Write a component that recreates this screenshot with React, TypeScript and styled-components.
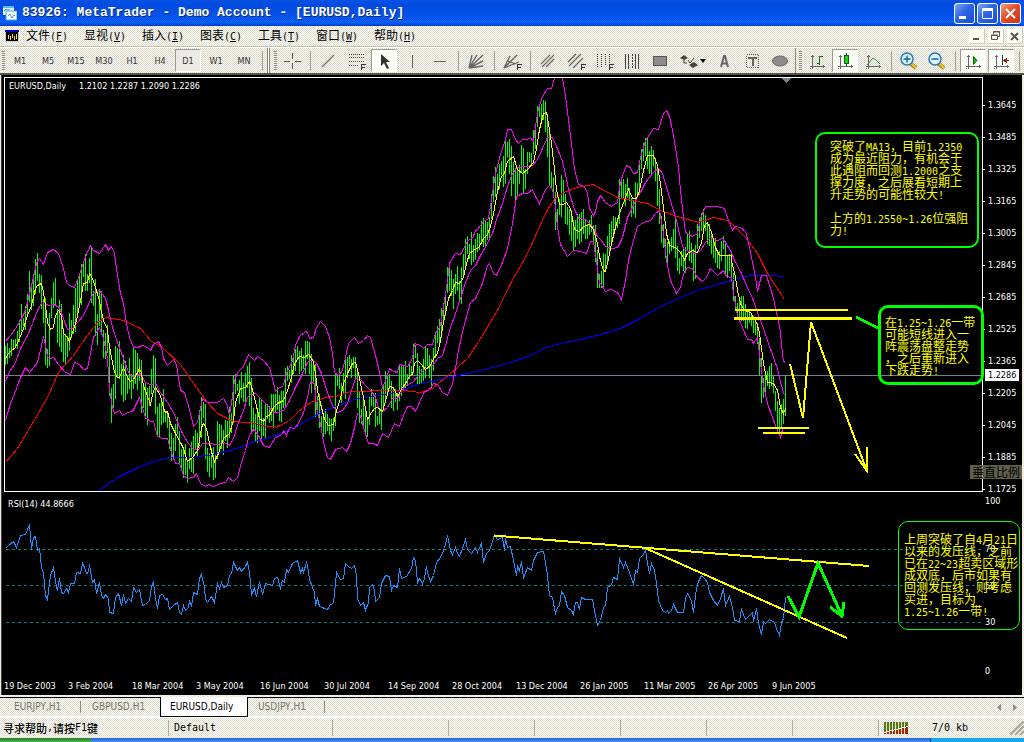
import React from "react";
import styled, { createGlobalStyle, css } from "styled-components";

const tahoma = `"DejaVu Sans Condensed", "DejaVu Sans", sans-serif`;
const song = `"Noto Sans CJK SC", sans-serif`;
const mono = `"Liberation Mono", "Noto Sans CJK SC", monospace`;
const halfWidth = `"DejaVu Sans Mono", "Noto Sans CJK SC", monospace`;

const weave = (a: string, b: string, c: string) => css`
  background-color: ${b};
  background-image: conic-gradient(${a} 25%, ${b} 0 50%, ${c} 0 75%, ${b} 0);
  background-size: 2px 2px;
`;

const Global = createGlobalStyle`
  * { box-sizing: border-box; }
  body { margin: 0; background: #ece9d8; }
  button { font: inherit; color: inherit; border: 0; padding: 0; margin: 0; background: none; }
  svg { display: block; }
`;

const Window = styled.div`
  display: flex;
  flex-direction: column;
  overflow: hidden;
  font-family: ${tahoma};
  font-size: 9px;
`;

/* ---------- title and menu ---------- */

const TitleBar = styled.header`
  display: flex;
  align-items: center;
  height: 26px;
  padding: 0 3px;
  gap: 5px;
  background: conic-gradient(#0033cc55 25%, #0000 0 50%, #0033cc55 0 75%, #0000 0) 0 0 / 2px 2px,
    linear-gradient(#0a58e8 0, #0250e4 20%, #0558ee 60%, #0a68ff 85%, #0040c8 100%);
`;

const Title = styled.h1`
  flex: 1;
  margin: 0;
  color: #fff;
  font: bold 13px/20px ${mono};
  white-space: pre;
  text-shadow: 1px 1px 0 #0a2a80;
`;

const WindowButtons = styled.div`
  display: flex;
  gap: 2px;
`;

const WindowButton = styled.button<{ $close?: boolean }>`
  width: 21px;
  height: 21px;
  border: 1px solid #fff;
  border-radius: 3px;
  background: ${(p) =>
    p.$close
      ? "linear-gradient(135deg, #f0a080, #e0502c 45%, #c83410)"
      : "linear-gradient(135deg, #7fa8f4, #2e66e4 45%, #1c4cd0)"};
`;

const MenuBar = styled.nav`
  display: flex;
  align-items: center;
  height: 21px;
  padding: 0 1px 0 5px;
  border-bottom: 1px solid #c4c2a4;
  ${weave("#ffffff", "#dfddd2", "#fffff0")}
`;

const MenuItems = styled.div`
  display: flex;
  flex: 1;
  gap: 16px;
  padding-left: 7px;
`;

const MenuItem = styled.button`
  width: 42px;
  color: #000;
  font: 12px/16px ${song};
  white-space: nowrap;
  text-align: left;
`;

const Narrow = styled.span`
  font-family: ${halfWidth};
  font-size: 10px;
`;

const MdiButtons = styled.div`
  display: flex;
  gap: 3px;
`;

const MdiButton = styled.button`
  width: 16px;
  height: 15px;
  background: #fffff4;
  border-right: 1px solid #d0cec0;
  border-bottom: 1px solid #d0cec0;
`;

/* ---------- toolbar ---------- */

const ToolBar = styled.div`
  display: flex;
  align-items: center;
  height: 26px;
  padding-left: 2px;
  border-top: 1px solid #fff;
  overflow: hidden;
  ${weave("#fffffa", "#dad8cd", "#f8f6ea")}
`;

const Grip = styled.span`
  flex: none;
  width: 3px;
  height: 20px;
  margin-right: 1px;
  background: repeating-linear-gradient(#8c8a80 0 1px, #f4f2e6 1px 2px);
`;

const Rule = styled.span`
  flex: none;
  width: 1px;
  height: 20px;
  margin: 0 3px 0 4px;
  background: #a4a296;
`;

const BandEdge = styled.span`
  flex: none;
  width: 3px;
  height: 25px;
  margin: 0 4px 0 1px;
  border-left: 1px solid #8c8a80;
  border-right: 1px solid #8c8a80;
  background: #fff;
`;

const BandEnd = styled.span`
  flex: none;
  width: 1px;
  height: 25px;
  margin: 0 3px 0 1px;
  background: #8c8a80;
`;

const Tool = styled.button<{ $pressed?: boolean; $wide?: boolean; $dim?: boolean }>`
  display: flex;
  align-items: center;
  justify-content: center;
  flex: none;
  width: ${(p) => (p.$wide ? 36 : 28)}px;
  height: 23px;
  color: #333;
  line-height: 12px;
  ${(p) =>
    p.$pressed &&
    css`
      border: 1px solid;
      border-color: #9c9a90 #fff #fff #9c9a90;
      background: ${p.$dim ? "#ebe9e4" : "#fdfdf8"};
      background-clip: padding-box;
      width: 26px;
      margin: 0 1px;
    `}
`;

/* ---------- chart ---------- */

const Frame = styled.main`
  padding: 0 2px 2px 1px;
  border-top: 2px solid #55544a;
  background: #f0eee2;
`;

const Chart = styled.section`
  position: relative;
  display: grid;
  grid-template-columns: minmax(0, 1fr) 39px;
  padding: 2px 0 0 2px;
  border-left: 1px solid #444;
  background: #000;
  color: #fff;
  height: 620px;
`;

const Plots = styled.div`
  display: flex;
  flex-direction: column;
`;

const PricePlot = styled.div`
  position: relative;
  height: 415px;
  border: 1px solid #fff;
`;

const RsiPlot = styled.div`
  position: relative;
  height: 188px;
`;

const Canvas = styled.svg`
  width: 100%;
  height: 100%;
`;

const Legend = styled.p<{ $top: number }>`
  position: absolute;
  left: 4px;
  top: ${(p) => p.$top}px;
  display: flex;
  margin: 0;
  line-height: 12px;
  white-space: pre;
`;

const Symbol = styled.span`
  width: 70px;
`;

const Dates = styled.div`
  display: flex;
  line-height: 13px;
`;

const DateLabel = styled.time`
  flex: 64 0 0;
  min-width: 0;
  white-space: nowrap;
`;

const DateRest = styled.span`
  flex: 147 0 0;
`;

const Scales = styled.div`
  position: relative;
`;

const PriceScale = styled.div`
  display: flex;
  flex-direction: column;
  gap: 16px;
  padding-top: 20px;
`;

const PriceMark = styled.span`
  display: flex;
  align-items: center;
  gap: 3px;
  line-height: 16px;
  &::before {
    content: "";
    width: 2px;
    height: 1px;
    background: #fff;
  }
`;

const RsiScale = styled.div`
  display: grid;
  grid-template-rows: 48px 37px 36px 49px 9px;
  padding-left: 2px;
  line-height: 9px;
`;

const LastPrice = styled.strong`
  position: absolute;
  top: 292px;
  left: 2px;
  width: 34px;
  padding-left: 3px;
  background: #fff;
  color: #000;
  font-weight: normal;
  line-height: 12px;
`;

const Note = styled.aside<{ $right: number; $top: number; $w: number; $h: number; $line: number; $pad: string }>`
  position: absolute;
  right: ${(p) => p.$right}px;
  top: ${(p) => p.$top}px;
  width: ${(p) => p.$w}px;
  height: ${(p) => p.$h}px;
  padding: ${(p) => p.$pad};
  border: ${(p) => p.$line}px solid #00ff00;
  border-radius: 10px;
  color: #ffff00;
  font: 12px/12px ${song};
  white-space: nowrap;
`;

const NoteLine = styled.div`
  height: 12px;
`;

const Hint = styled.div`
  position: absolute;
  right: 0;
  top: 390px;
  padding: 0 2px;
  background: #77775fcc;
  color: #000;
  font: 12px/14px ${song};
`;

/* ---------- tabs and status ---------- */

const TabBar = styled.div`
  display: flex;
  height: 21px;
  border-top: 1px solid #000;
  border-bottom: 2px solid #fff;
  ${weave("#ffffff", "#dcdacf", "#fffff0")}
`;

const Tab = styled.button<{ $w: number; $pad: number; $active?: boolean; $rule?: boolean }>`
  width: ${(p) => p.$w}px;
  padding-left: ${(p) => p.$pad}px;
  height: 18px;
  color: #77756c;
  font-size: 10px;
  line-height: 16px;
  text-align: left;
  white-space: nowrap;
  ${(p) =>
    p.$rule &&
    css`
      background: linear-gradient(#8c8a80, #8c8a80) right 3px / 1px 12px no-repeat;
    `}
  ${(p) =>
    p.$active &&
    css`
      height: 20px;
      margin-top: -1px;
      border: solid #000;
      border-width: 0 1px 1px 1px;
      background: #fff;
      color: #000;
      line-height: 19px;
    `}
`;

const TabScroll = styled.div`
  display: flex;
  gap: 12px;
  align-items: center;
  margin-left: auto;
  padding-right: 7px;
`;

const StatusBar = styled.footer`
  display: flex;
  align-items: center;
  height: 20px;
  font: 500 11px/16px ${song};
  overflow: hidden;
  ${weave("#ffffff", "#dfddd2", "#fffff0")}
`;

const Cell = styled.div<{ $w?: number; $first?: boolean }>`
  display: flex;
  align-items: center;
  flex: ${(p) => (p.$w ? `0 0 ${p.$w}px` : "1")};
  height: 16px;
  padding-left: ${(p) => (p.$first ? 3 : 5)}px;
  white-space: pre;
  border-left: ${(p) => (p.$first ? "0" : "1px solid #b0aea0")};
`;

const Traffic = styled.span`
  flex: 1;
  padding-left: 24px;
  font: 10px/16px ${halfWidth};
`;

const TaskBar = styled.div`
  display: flex;
  height: 4px;
  background: linear-gradient(#2a62d8, #4a8cf4);
`;

const StartEdge = styled.span`
  width: 92px;
  border-radius: 0 4px 0 0;
  background: linear-gradient(#2c7c2c, #48b048);
`;

const TrayEdge = styled.span`
  width: 94px;
  margin-left: auto;
  border-left: 1px solid #083c90;
  background: #18a8ec;
`;

/* ---------- data ---------- */

// high,low in plot pixels; one pair for each daily bar, two pixels apart from x = 5
const bars = `345,364 342,363 347,357 338,355 339,348 338,347 330,348 319,341 303,330 317,325 305,329 293,315 270,301 283,309 273,305 258,293 252,280 273,292 274,308 298,322 297,364 348,367 312,365 297,317 281,307 277,305 308,342 299,346 303,351 327,361 333,363 335,356 312,350 319,337 304,333 287,331 279,313 274,303 263,304 263,276 253,290 273,290 257,282 246,302 290,305 278,335 313,344 288,325 290,333 329,357 332,358 324,352 342,395 387,422 383,407 345,398 347,377 340,378 363,394 354,401 360,399 375,393 357,388 373,398 345,388 349,383 352,389 358,380 359,412 383,407 382,418 387,424 385,405 368,393 354,387 357,413 406,434 402,437 397,424 388,422 410,421 412,427 417,448 432,460 437,457 423,450 416,433 430,463 448,467 447,477 443,474 460,482 447,468 441,471 435,473 429,448 432,455 409,445 396,437 401,417 403,458 447,471 452,476 447,467 446,479 452,477 420,458 423,452 424,448 429,454 419,440 420,447 406,437 412,432 374,422 373,393 383,390 379,403 371,397 382,401 372,405 365,387 361,405 377,430 407,430 413,441 412,442 397,430 398,438 417,435 402,438 403,418 405,422 393,420 393,427 393,412 386,409 394,420 390,421 390,407 367,405 365,380 369,378 354,382 352,373 348,370 345,358 350,373 347,370 354,368 340,373 340,358 341,373 353,392 362,383 363,416 395,414 393,427 415,430 413,436 408,433 413,430 417,434 418,440 417,430 373,425 375,385 367,388 382,402 372,393 355,398 356,377 354,365 358,377 356,367 356,378 368,407 390,422 408,423 397,426 405,433 418,436 395,424 388,405 392,406 392,426 415,424 408,423 388,429 384,407 370,402 373,393 373,388 380,407 388,410 388,401 391,409 363,400 365,395 365,388 360,387 373,385 363,378 365,375 343,372 344,357 352,383 365,383 368,383 358,380 345,377 347,365 354,377 358,388 347,370 331,357 325,342 318,343 307,337 302,320 290,315 266,292 263,290 269,295 278,308 273,293 265,290 280,300 266,303 253,277 238,268 235,253 243,258 231,264 244,261 238,259 232,251 233,249 220,243 217,246 219,245 221,239 216,238 193,218 175,201 166,196 173,188 163,188 160,174 155,186 140,183 141,156 138,173 145,195 161,183 167,206 168,196 164,183 144,171 147,193 168,188 151,173 151,161 152,164 129,153 123,148 105,126 106,116 103,123 99,119 100,131 113,156 133,184 171,186 176,196 191,229 208,223 198,214 174,216 179,201 193,223 206,224 208,234 209,240 219,249 219,246 213,238 213,243 211,241 208,233 218,238 223,238 219,234 214,231 224,243 224,261 249,287 273,287 270,287 252,286 253,270 235,260 223,253 220,243 215,237 216,228 217,227 178,223 178,197 178,197 183,205 177,197 187,200 197,216 200,213 181,217 182,197 160,193 148,168 142,160 137,155 137,168 150,173 145,175 149,165 157,180 168,205 188,223 215,242 223,247 238,257 241,262 240,253 236,250 228,248 218,257 245,270 257,273 250,265 247,270 246,272 232,250 230,260 242,262 248,280 244,278 223,248 217,237 212,230 208,232 214,230 222,243 223,245 233,253 238,257 237,262 250,267 250,268 240,260 235,248 240,272 255,277 253,270 250,280 272,300 295,310 302,317 297,318 295,320 295,320 303,327 310,328 310,322 313,325 315,332 317,334 322,343 337,375 357,402 377,397 373,393 370,385 365,388 362,385 375,392 390,410 400,430 407,432 403,427 398,423 375,415`
  .split(" ")
  .map((pair) => pair.split(",").map(Number));

const barPath = bars.map(([hi, lo], i) => `M${5 + i * 2} ${hi}V${lo}`).join("");

// Each leg holds x y pairs in thirds of a pixel, counted from its own origin.
type Leg = [number, number, string];
const trace = (legs: Leg[]) =>
  "M" +
  legs
    .map(([ox, oy, s]) => {
      const n = s.trim().split(/[ ,]+/).map(Number);
      const out: string[] = [];
      for (let i = 0; i < n.length; i += 2) out.push(`${Math.round(ox + n[i] / 3)} ${Math.round(oy + n[i + 1] / 3)}`);
      return out.join("L");
    })
    .join("L");

const fastAverage = trace([
  [0, 230, "16,388 22,372 34,360 46,352 58,325 70,295 82,255 94,225 106,175 112,165 124,160 130,185 136,225 142,275 150,298 158,290 166,255 175,240 182,255 190,310 200,322 208,332 220,298 228,270 240,210 250,160 260,155 268,130 276,145 286,170 298,210 304,245 312,280 320,293 325,330 332,380 342,425 350,442 358,440 370,412 380,440 390,452 400,448 410,425 418,415 424,430 430,465 438,490 450,522 460,480 466,472 480,495 488,535 495,545 502,543 510,580 525,610 540,635 550,655 562,692 575,680 590,660 598,630 604,590 610,578 618,595 628,640 636,675 643,693 655,670 670,625 688,608 698,570 706,515 720,475 735,472 746,452"],
  [250, 230, "0,460 10,490 20,540 28,565 40,573 48,557 58,555 70,530 80,520 100,510 112,480 122,440 132,400 148,377 162,380 175,372 188,392 196,430 202,480 212,530 222,567 235,585 250,583 258,540 270,505 280,460 292,430 305,400 316,397 323,430 330,460 340,500 350,568 362,545 372,535 382,530 396,543 408,500 418,467 430,470 442,498 455,470 470,450 478,435 485,432 492,400 500,390 512,403 524,418 540,405 550,385 560,370 570,330 580,275 588,235 595,205 605,180 616,155 628,160 638,140 648,100 658,70 670,60 685,52 698,28"],
  [430, 76, "155,490 170,475 180,450 190,410 200,345 212,300 222,290 232,255 250,240 262,280 276,290 290,280 308,258 318,215 328,160 340,112 347,107 355,140 363,200 372,280 378,340 388,385 398,385 408,378 420,395 432,460 446,465 460,450 478,445 490,458 500,500 507,540"],
  [600, 90, "0,510 8,540 16,542 24,505 34,460 48,400 60,360 72,330 84,298 96,325 108,325 118,300 128,240 142,195 160,195 170,225 180,280 188,350 198,430 208,465 225,470 240,485 252,507 262,490 275,480 290,485 302,455 312,405 320,395 332,425 345,470 358,495 375,495 392,495"],
  [720, 260, "34,0 44,50 52,90 60,130 72,150 90,155 108,185 116,215 122,265 130,310 142,365 160,368 170,390 180,440 190,458 194,445"],
]);

const upperBand = trace([
  [0, 230, "16,332 30,315 45,295 60,270 75,240 85,200 100,140 108,100 116,85 130,102 142,65 160,58 175,70 190,115 198,155 208,165 222,170 235,140 245,105 258,72 270,45 280,60 298,70 314,42 324,60 334,47 342,70 348,115 360,190 370,220 378,280 388,320 400,352 415,352 425,345 440,350 450,360 460,343 475,333 483,350 490,385 500,405 518,388 528,402 533,440 540,480 553,485 560,515 570,550 580,587 592,575 600,535 606,505 620,517 650,517 668,505 678,520 686,552 694,520 702,450 712,425 728,408 745,373"],
  [250, 230, "0,378 12,390 22,378 40,390 58,410 66,445 75,482 84,473 100,465 108,430 125,390 135,345 148,318 165,303 172,305 178,323 190,320 197,290 210,273 225,287 238,320 245,370 252,425 264,434 276,420 284,380 295,340 312,322 325,338 340,330 350,315 360,320 375,375 385,410 395,472 405,450 418,415 430,423 442,425 448,402 470,407 485,385 493,340 510,345 520,355 530,343 545,343 556,310 570,285 580,230 590,150 598,100 615,68 630,72 642,50 652,30 665,25 676,0"],
  [430, 76, "140,460 158,435 175,425 184,370 196,290 210,235 224,190 232,158 244,158 255,190 265,200 276,190 290,190 300,183 308,195 316,150 325,95 335,60 350,35 362,35 370,15 380,-20 390,-20 397,4 402,40 408,80 414,130 422,200 432,280 445,325 462,330 470,350 476,395 488,418 496,405 502,375 507,362"],
  [600, 90, "0,316 15,335 34,348 50,335 58,290 66,255 78,225 88,228 98,248 112,245 120,200 135,150 148,132 160,115 175,117 188,70 197,60 207,78 215,120 225,170 234,230 240,300 248,380 256,425 275,437 290,430 300,385 316,348 350,347 372,355 385,390 395,420 404,408 420,410 435,422 445,455 452,500"],
  [720, 260, "104,50 112,92 124,45 138,45 150,85 160,115 166,145 174,180 180,220 186,280 190,303 194,305"],
]);

const middleBand = trace([
  [0, 230, "16,452 25,430 45,395 60,355 80,315 95,280 110,240 125,212 145,225 160,222 178,230 190,265 200,297 215,293 230,275 250,255 265,222 280,185 298,180 315,205 325,240 335,290 350,335 370,385 385,425 400,440 420,428 435,455 450,463 465,460 480,485 500,515 520,545 532,575 545,610 565,640 580,657 595,657 605,640 625,640 650,643 672,635 688,645 700,625 715,575 728,540 740,500"],
  [250, 230, "0,492 15,490 30,503 50,525 70,545 85,547 100,540 115,515 135,470 155,430 170,395 185,388 198,398 212,430 230,485 245,525 260,545 275,540 290,520 300,490 315,445 330,447 345,465 360,480 375,500 385,530 395,543 410,530 425,505 440,503 450,490 465,465 485,455 505,435 525,415 545,405 560,385 575,375 585,345 600,290 615,250 630,205 645,155 660,120 675,105 690,75 710,40 730,0"],
  [430, 76, "198,430 215,380 230,330 245,290 260,273 285,270 305,267 320,250 335,215 350,183 365,183 380,215 395,255 405,295 415,340 430,390 445,425 465,430 485,450 500,480"],
  [600, 90, "0,448 15,468 35,475 50,470 65,440 80,380 95,350 108,325 120,305 135,275 155,250 175,235 185,250 200,300 215,350 228,390 240,445 250,475 265,482 285,490 300,480 315,455 330,442 350,450 365,445 380,465 392,485"],
  [720, 260, "42,0 62,40 78,75 100,120 115,165 130,205 145,250 160,290 170,325 180,365 192,405"],
]);

const lowerBand = trace([
  [0, 230, "16,570 30,520 48,475 60,440 75,412 88,427 98,410 110,395 120,360 130,318 136,345 140,378 150,385 160,382 175,402 195,425 210,432 222,395 238,403 250,418 260,415 270,370 280,320 298,290 310,325 320,385 328,480 335,530 342,548 357,540 367,555 380,545 395,543 405,525 418,500 425,530 435,560 450,572 460,572 472,617 485,625 500,625 512,665 525,700 538,700 550,735 562,745 578,740 588,728 600,760 615,767 625,762 640,767 660,760 675,755 685,740 700,753 712,740 722,695 735,660 745,620"],
  [250, 230, "0,612 10,595 25,615 38,645 58,652 75,620 95,612 100,600 108,615 118,590 132,595 145,580 160,545 170,500 180,452 192,460 197,530 210,580 220,635 232,680 240,687 255,657 275,652 288,663 300,640 312,590 322,550 330,555 340,590 355,640 370,640 382,645 395,610 415,620 432,578 448,587 458,555 470,527 482,527 495,543 508,515 522,483 535,480 548,458 560,463 575,485 592,495 605,460 615,415 625,360 640,290 660,215 675,205 695,160 710,105 718,98 728,130 738,135 755,95 770,55"],
  [430, 76, "245,440 258,360 275,350 290,352 305,340 315,360 328,382 345,340 358,328 366,340 374,390 380,450 390,505 412,540 430,522 450,525 468,530 480,495 490,495 498,555 508,620"],
  [600, 90, "0,580 15,603 30,597 50,605 63,627 75,570 85,510 98,450 112,408 130,395 150,390 165,370 178,360 188,430 198,510 210,570 228,608 240,590 250,550 262,530 275,535 290,560 305,572 318,560 330,535 352,555 368,540 378,557"],
  [720, 260, "34,50 40,100 52,165 65,200 80,238 92,238 100,250 112,232 118,280 125,360 140,430 155,470 170,510 180,530 186,508"],
]);

const slowAverage = trace([
  [0, 230, "16,697 50,655 95,580 140,500 175,425 220,375 260,315 290,275 315,262 370,270 420,295 450,330 490,355 540,403 580,460 620,515 650,550 700,574 740,575"],
  [250, 230, "0,577 50,588 80,588 115,572 145,543 180,517 225,500 255,498 300,482 330,483 400,480 460,480 510,487 545,475 600,428 650,385 690,325 740,240"],
  [430, 76, "240,620 290,530 330,445 350,400 375,365 400,348 440,332 490,324"],
  [600, 90, "0,293 50,322 140,340 180,360 240,382 295,395 340,382 380,390 400,405 435,440 470,490 500,550 553,628"],
]);

const longAverage = trace([
  [0, 230, "292,782 350,742 410,710 470,690 510,682 570,680 640,672 700,658 750,638"],
  [250, 230, "0,637 60,622 130,593 190,557 230,537 320,505 400,492 450,482 490,465 580,445 680,422 780,397"],
  [530, 355, "0,0 40,-22 90,-37 150,-48"],
  [600, 90, "0,733 60,715 120,685 180,648 240,622 300,597 350,583 410,565 450,556 510,556 553,559"],
]);

const rsi = trace([
  [0, 495, "16,158 24,150 38,138 47,155 60,120 74,118 88,88 94,163 100,125 106,122 112,165 118,160 124,215 130,235 136,300 142,312 150,240 160,215 168,275 172,285 178,248 184,290 190,295 198,280 203,292 210,265 222,263 228,230 240,233 245,203 252,215 258,235 264,230 268,208 275,260 282,252 288,295 298,260 304,300 310,310 316,298 325,310 328,352 340,355 346,305 354,295 364,330 370,298 376,325 385,310 394,318 400,275 408,290 416,282 425,330 435,328 448,315 454,272 460,262 466,310 472,340 478,300 486,297 495,312 502,310 508,342 520,330 532,320 538,350 544,357 550,330 556,345 563,335 568,315 574,333 580,290 592,297 597,250 604,237 611,275 616,312 622,322 634,303 641,322 652,265 658,278 664,262 670,275 682,270 688,240 694,233 700,200 712,225 718,215 724,228 735,212 742,200 748,230 754,297 761,280 768,302 778,258 785,297 796,265 815,270 822,250 832,247 839,280 845,255 851,262 857,222 865,230 875,205 890,195 899,232 905,218 910,230 917,200 922,210 928,252 936,275 941,290 946,330 951,310 958,332 980,343 990,328 1000,323 1004,265 1007,230"],
  [340, 495, "0,253 8,250 16,203 24,212 34,220 42,210 47,240 52,310 60,330 70,320 76,345 83,320 88,275 95,268 102,285 106,317 116,305 124,265 135,240 148,243 154,285 160,270 172,275 178,220 184,248 198,242 214,220 220,185 226,195 232,260 238,250 245,265 252,250 257,213 262,230 269,257 278,240 287,200 300,185 312,160 322,120 330,165 336,178 346,155 352,175 358,183 366,160 376,133 382,163 394,175 406,155 412,170 424,145 430,202 437,175 448,165 455,138 463,118 472,133 485,125 491,165 496,130 502,155 510,152 518,195 527,240 532,212 537,225 544,198 550,248 562,215 572,225 580,195 592,170 610,168 616,200 622,240 628,300 635,305 646,355 652,335 658,330 664,287 671,300 680,335 692,345 700,358 706,322 712,322 718,342 724,307 735,313 755,312 763,345 772,390 780,375 788,335 796,330 802,275 814,268 820,247 832,252 838,190 848,215 856,202 868,230 880,268 886,225 892,230 898,190 908,178 916,163 922,205 928,235 934,205 943,225 948,265 955,315 965,345 974,350 980,345 985,355 992,345 1000,328 1010,352"],
  [680, 495, "0,352 8,350 15,310 22,295 34,315 40,350 47,280 54,258 62,240 72,250 80,260 86,290 100,315 112,330 120,310 128,278 136,330 148,302 155,335 162,375 178,378 184,343 196,372 215,352 220,378 227,340 235,385 244,418 250,378 256,385 268,372 283,380 288,400 298,420 304,380 310,368 316,305"],
]);

const prices = ["1.3645", "1.3485", "1.3325", "1.3165", "1.3005", "1.2845", "1.2685", "1.2525", "1.2365", "1.2205", "1.2045", "1.1885", "1.1725"];
const dates = ["19 Dec 2003", "3 Feb 2004", "18 Mar 2004", "3 May 2004", "16 Jun 2004", "30 Jul 2004", "14 Sep 2004", "28 Oct 2004", "13 Dec 2004", "26 Jan 2005", "11 Mar 2005", "26 Apr 2005", "9 Jun 2005"];
const menus = [["文件", "F"], ["显视", "V"], ["插入", "I"], ["图表", "C"], ["工具", "T"], ["窗口", "W"], ["帮助", "H"]];

const resistance = ["突破了MA13，目前1.2350", "成为最近阻力，有机会于", "此遇阻而回测1.2000之支", "撑力度，之后展看短期上", "升走势的可能性较大!", "", "上方的1.2550~1.26位强阻", "力!"];
const consolidation = ["在1.25~1.26一带", "可能短线进入一", "阵震荡盘整走势", "，之后重新进入", "下跌走势!"];
const outlook = ["上周突破了自4月21日", "以来的发压线，之前", "已在22~23超卖区域形", "成双底，后市如果有", "回测发压线，则考虑", "买进，目标为", "1.25~1.26一带!"];

/** Sets Latin runs in half-width cells beside the full-width characters. */
const Mixed = ({ text }: { text: string }) => (
  <>
    {text.split(/([\x21-\x7e]+)/).map((part, i) => (i % 2 ? <Narrow key={i}>{part}</Narrow> : part))}
  </>
);

const NoteText = ({ lines }: { lines: string[] }) => (
  <>
    {lines.map((line, i) => (
      <NoteLine key={i}>
        <Mixed text={line} />
      </NoteLine>
    ))}
  </>
);

/* ---------- icons ---------- */

const Icon = ({ children }: { children: React.ReactNode }) => (
  <svg width="24" height="20" viewBox="0 0 24 20" fill="none" stroke="#666" shapeRendering="crispEdges" aria-hidden="true">
    {children}
  </svg>
);
const F = () => <path d="M17.5 19v-5.5h4M17 16.5h4" stroke="#333" />;
const Axes = () => <path d="M7.5 4v14M5 15.5h15M6 5.5h3M18.5 14v3M5 17.5h1" stroke="#666" />;

const icons: Record<string, React.ReactNode> = {
  crosshair: <path d="M12.5 2v6M12.5 12v6M4 10.5h6M15 10.5h6" stroke="#555" />,
  trend: <path d="M6 16L18 4" stroke="#777" strokeWidth="1.5" shapeRendering="auto" />,
  fibo: <><path d="M5 3.5h15M5 6.5h15M5 10.5h15M5 14.5h10" strokeDasharray="1 1" stroke="#444" /><F /></>,
  cursor: <path d="M9 3v12l3-3 3 6 2-1-3-6h4z" fill="#333" stroke="none" shapeRendering="auto" />,
  vertical: <path d="M12.5 4v13" />,
  horizontal: <path d="M6 10.5h12" />,
  fan: <path d="M5 17L8 4M5 17L13 4M5 17L19 4M5 17L19 10M5 17L19 15" strokeWidth="1.4" shapeRendering="auto" />,
  fork: <><path d="M4 17L10 5M4 17L17 4M4 17L19 11M8 10l8 3" strokeWidth="1.3" shapeRendering="auto" /><F /></>,
  channel: <path d="M5 13L14 4M6 16L18 4M10 16L18 8" strokeWidth="1.3" shapeRendering="auto" />,
  channelF: <><path d="M4 11L12 3M5 15L17 3M9 17L19 7" strokeWidth="1.3" shapeRendering="auto" /><F /></>,
  zones: <><path d="M5.5 3v14M9.5 3v14M13.5 3v12M17.5 3v9" strokeDasharray="1 1" stroke="#444" /><F /></>,
  cycles: <><path d="M5.5 3v15M8.5 3v15M15.5 3v15M18.5 3v15" stroke="#444" /><path d="M12.5 3v15" strokeDasharray="2 1" stroke="#444" /></>,
  rect: <rect x="5.5" y="5.5" width="13" height="9" rx="1" fill="#8c8c8c" stroke="#555" />,
  letter: <path d="M9 16L12 5h1L16 16M10 12.5h5" strokeWidth="2" shapeRendering="auto" />,
  label: <><rect x="6.5" y="3.5" width="12" height="13" strokeDasharray="1 1" /><path d="M8 6.5h9M12.5 6v9" strokeWidth="2" /></>,
  ellipse: <ellipse cx="12" cy="10" rx="7.5" ry="5" fill="#8c8c8c" stroke="#666" shapeRendering="auto" />,
  barsChart: <><Axes /><path d="M14.5 5v9M15 5.5h3M12 12.5h2" stroke="#0a7a0a" /></>,
  candles: <><Axes /><path d="M13.5 2v13" stroke="#064" /><rect x="11.5" y="4.5" width="4" height="8" fill="#20d020" stroke="#086808" /></>,
  lineChart: <><Axes /><path d="M6 14L12 7L15 9L19 13" stroke="#2a9a2a" shapeRendering="auto" /></>,
  scroll: <><Axes /><path d="M12.5 5.5v8L16 9.5z" fill="#20b020" stroke="#087008" shapeRendering="auto" /></>,
  shift: <><Axes /><path d="M13.5 4v10" stroke="#145" /><path d="M15 9.5h5M17 8l-2 1.5 2 1.5z" fill="#b02000" stroke="#b02000" /></>,
};

const Magnifier = ({ plus }: { plus?: boolean }) => (
  <svg width="20" height="20" viewBox="0 0 20 20" aria-hidden="true">
    <path d="M11 12l6 5" stroke="#a87808" strokeWidth="4" />
    <path d="M12 12l5 5" stroke="#f0c838" strokeWidth="2" />
    <circle cx="8" cy="8" r="6" fill="#d8f4fc" stroke="#2878b8" strokeWidth="1.5" />
    <path d={plus ? "M4.5 8h7M8 4.5v7" : "M4.5 8h7"} stroke="#2060a0" strokeWidth="1.5" />
  </svg>
);

const ToolIcon = ({ name, label, pressed }: { name: string; label: string; pressed?: boolean }) => (
  <Tool aria-label={label} $pressed={pressed}>
    <Icon>{icons[name]}</Icon>
  </Tool>
);

export default function App() {
  return (
    <Window>
      <Global />
      <TitleBar>
        <svg width="14" height="16" viewBox="0 0 14 16" aria-hidden="true">
          <rect x="0" y="1" width="11" height="9" fill="#e8f8ff" />
          <rect x="0" y="1" width="11" height="2" fill="#60b8e8" />
          <rect x="3" y="6" width="11" height="9" fill="#f8ffff" stroke="#48a0d8" />
          <path d="M5 11l2-2 2 4 2-3 1 1M1 6l2-2 2 1 2-1" fill="none" stroke="#40a0c0" />
        </svg>
        <Title>83926: MetaTrader - Demo Account - [EURUSD,Daily]</Title>
        <WindowButtons>
          <WindowButton aria-label="Minimize">
            <svg width="19" height="19" aria-hidden="true"><path d="M4 13.5h7" stroke="#fff" strokeWidth="3" /></svg>
          </WindowButton>
          <WindowButton aria-label="Maximize">
            <svg width="19" height="19" aria-hidden="true"><path d="M4.5 5v9.5h10V5" stroke="#fff" fill="none" /><path d="M4 5.5h11" stroke="#fff" strokeWidth="3" /></svg>
          </WindowButton>
          <WindowButton $close aria-label="Close">
            <svg width="19" height="19" aria-hidden="true"><path d="M5 5l9 9M14 5l-9 9" stroke="#fff" strokeWidth="2" /></svg>
          </WindowButton>
        </WindowButtons>
      </TitleBar>

      <MenuBar>
        <svg width="14" height="12" viewBox="0 0 14 12" shapeRendering="crispEdges" aria-hidden="true">
          <rect width="14" height="12" fill="#ccc" />
          <rect x="1" y="1" width="12" height="10" fill="#000" />
          <rect width="14" height="2" fill="#0000c8" />
          <path d="M3.5 5v4M5.5 6v4M7.5 4v4M9.5 6v4M11.5 4v5" stroke="#ffe600" />
        </svg>
        <MenuItems>
          {menus.map(([name, key]) => (
            <MenuItem key={key}>
              {name}
              <Narrow>
                (<u>{key}</u>)
              </Narrow>
            </MenuItem>
          ))}
        </MenuItems>
        <MdiButtons>
          <MdiButton aria-label="Minimize chart">
            <svg width="15" height="14" aria-hidden="true"><path d="M4 10h6" stroke="#555" strokeWidth="2" /></svg>
          </MdiButton>
          <MdiButton aria-label="Restore chart">
            <svg width="15" height="14" fill="none" stroke="#555" aria-hidden="true"><path d="M5.5 5V2.5h6v5H10M5 3h7M3.5 6.5h6v4h-6zM3 6h7" /></svg>
          </MdiButton>
          <MdiButton aria-label="Close chart">
            <svg width="15" height="14" aria-hidden="true"><path d="M4 4l7 7M11 4l-7 7" stroke="#555" strokeWidth="2" /></svg>
          </MdiButton>
        </MdiButtons>
      </MenuBar>

      <ToolBar role="toolbar">
        <Grip />
        {["M1", "M5", "M15", "M30", "H1", "H4", "D1", "W1", "MN"].map((t) => (
          <Tool key={t} $pressed={t === "D1"} $dim={t === "D1"}>{t}</Tool>
        ))}
        <Rule />
        <BandEdge />
        <Grip />
        <ToolIcon name="crosshair" label="Crosshair" />
        <Rule />
        <ToolIcon name="trend" label="Trendline" />
        <ToolIcon name="fibo" label="Fibonacci retracement" />
        <ToolIcon name="cursor" label="Cursor" pressed />
        <ToolIcon name="vertical" label="Vertical line" />
        <ToolIcon name="horizontal" label="Horizontal line" />
        <Rule />
        <ToolIcon name="fan" label="Gann fan" />
        <Rule />
        <ToolIcon name="fork" label="Fibonacci fan" />
        <Rule />
        <ToolIcon name="channel" label="Channel" />
        <ToolIcon name="channelF" label="Fibonacci channel" />
        <ToolIcon name="zones" label="Fibonacci time zones" />
        <ToolIcon name="cycles" label="Cycle lines" />
        <ToolIcon name="rect" label="Rectangle" />
        <Tool $wide aria-label="Arrows">
          <svg width="28" height="20" viewBox="0 0 28 20" aria-hidden="true">
            <path d="M2 7l4-3 4 3-4 2zM11 14l4 3 5-3-4-3z" fill="#444" />
            <path d="M6 8v4h3M10 9l2 3 4-5" stroke="#444" fill="none" />
            <path d="M22 8h6l-3 4z" fill="#000" />
          </svg>
        </Tool>
        <ToolIcon name="letter" label="Text" />
        <ToolIcon name="label" label="Text label" />
        <ToolIcon name="ellipse" label="Ellipse" />
        <BandEnd />
        <Grip />
        <ToolIcon name="barsChart" label="Bar chart" />
        <ToolIcon name="candles" label="Candlesticks" pressed />
        <ToolIcon name="lineChart" label="Line chart" />
        <Rule />
        <Tool aria-label="Zoom in"><Magnifier plus /></Tool>
        <Tool aria-label="Zoom out"><Magnifier /></Tool>
        <Rule />
        <ToolIcon name="scroll" label="Auto scroll" pressed />
        <ToolIcon name="shift" label="Chart shift" pressed />
        <Rule />
      </ToolBar>

      <Frame>
        <Chart>
          <Plots>
            <PricePlot>
              <Canvas viewBox="5 78 977 413" preserveAspectRatio="none" fill="none" shapeRendering="crispEdges" role="img" aria-label="EURUSD daily price">
                <path d="M781 78h10l-5 5z" fill="#708090" />
                <path d="M5 375.5H982" stroke="#708090" />
                <g transform="translate(0.5 0.5)">
                  <path d={barPath} stroke="#00ff00" />
                  <path d={longAverage} stroke="#0000ff" />
                  <path d={slowAverage} stroke="#ff0000" />
                  <path d={upperBand} stroke="#ff00ff" />
                  <path d={middleBand} stroke="#ff00ff" />
                  <path d={lowerBand} stroke="#ff00ff" />
                  <path d={fastAverage} stroke="#ffff00" />
                </g>
                <path d="M735 310h113M758 428h51M763 433h42M790 364L803 418L811 322L867 471M855 454L867 471V447" stroke="#ffff00" strokeWidth="2" />
                <path d="M734 318.5h118" stroke="#ffff00" strokeWidth="3" />
                <path d="M856 317L880 329" stroke="#00ff00" strokeWidth="3" />
              </Canvas>
              <Legend $top={2}>
                <Symbol>EURUSD,Daily</Symbol>
                <span>1.2102 1.2287 1.2090 1.2286</span>
              </Legend>
            </PricePlot>
            <RsiPlot>
              <Canvas viewBox="4 492 979 188" preserveAspectRatio="none" fill="none" shapeRendering="crispEdges" role="img" aria-label="Relative strength index">
                <path d="M6 549.5H983M6 585.5H983M6 622.5H983" stroke="#008080" strokeDasharray="3 3" />
                <path d={rsi} stroke="#1e90ff" transform="translate(0.5 0.5)" />
                <path d="M494 535.5L869 566M645 548L847 638" stroke="#ffff00" strokeWidth="2" />
                <path d="M788 596L799 617L818 563L842 616M830 607L842 616L844 602" stroke="#00ff00" strokeWidth="3" />
              </Canvas>
              <Legend $top={6}>RSI(14) 44.8666</Legend>
            </RsiPlot>
            <Dates>
              {dates.map((d) => (
                <DateLabel key={d}>{d}</DateLabel>
              ))}
              <DateRest />
            </Dates>
          </Plots>
          <Scales>
            <PriceScale>
              {prices.map((p) => (
                <PriceMark key={p}>{p}</PriceMark>
              ))}
            </PriceScale>
            <RsiScale>
              <span>100</span>
              <span>70</span>
              <span>50</span>
              <span>30</span>
              <span>0</span>
            </RsiScale>
            <LastPrice>1.2286</LastPrice>
          </Scales>
          <Note $right={43} $top={57} $w={164} $h={116} $line={2} $pad="6px 0 0 13px">
            <NoteText lines={resistance} />
          </Note>
          <Note $right={38} $top={230} $w={106} $h={80} $line={3} $pad="8px 0 0 4px">
            <NoteText lines={consolidation} />
          </Note>
          <Note $right={2} $top={446} $w={122} $h={109} $line={1} $pad="11px 0 0 5px">
            <NoteText lines={outlook} />
          </Note>
          <Hint role="tooltip">垂直比例</Hint>
        </Chart>
      </Frame>

      <TabBar role="tablist">
        <Tab role="tab" $w={81} $pad={14} $rule>EURJPY,H1</Tab>
        <Tab role="tab" $w={79} $pad={11}>GBPUSD,H1</Tab>
        <Tab role="tab" aria-selected $w={88} $pad={9} $active>EURUSD,Daily</Tab>
        <Tab role="tab" $w={77} $pad={10} $rule>USDJPY,H1</Tab>
        <TabScroll>
          <button aria-label="Scroll tabs left"><svg width="4" height="7" aria-hidden="true"><path d="M4 0v7L0 3.5z" fill="#8c8a88" /></svg></button>
          <button aria-label="Scroll tabs right"><svg width="4" height="7" aria-hidden="true"><path d="M0 0v7L4 3.5z" fill="#8c8a88" /></svg></button>
        </TabScroll>
      </TabBar>

      <StatusBar>
        <Cell $w={168} $first><Mixed text="寻求帮助,请按F1键" /></Cell>
        <Cell $w={164}><Mixed text="Default" /></Cell>
        <Cell $w={116} />
        <Cell $w={86} />
        <Cell $w={86} />
        <Cell $w={86} />
        <Cell $w={86} />
        <Cell $w={86} />
        <Cell>
          <svg width="24" height="12" viewBox="0 0 24 12" shapeRendering="crispEdges" aria-hidden="true">
            <path d="M0 0h24v4L0 10z" fill="#587818" />
            <path d="M0 11L24 5v7H0z" fill="#a02808" />
            <path d="M2.5 0v12M5.5 0v12M8.5 0v12M11.5 0v12M14.5 0v12M17.5 0v12M20.5 0v12" stroke="#e8e4c8" />
            <path d="M0 10.5L24 4.5" stroke="#fff" />
          </svg>
          <Traffic>7/0 kb</Traffic>
          <svg width="14" height="14" viewBox="0 0 14 14" aria-hidden="true">
            <path d="M0 14L14 0M5 14L14 5M10 14l4-4" stroke="#a8a698" strokeWidth="2" />
          </svg>
        </Cell>
      </StatusBar>
      <TaskBar>
        <StartEdge />
        <TrayEdge />
      </TaskBar>
    </Window>
  );
}
